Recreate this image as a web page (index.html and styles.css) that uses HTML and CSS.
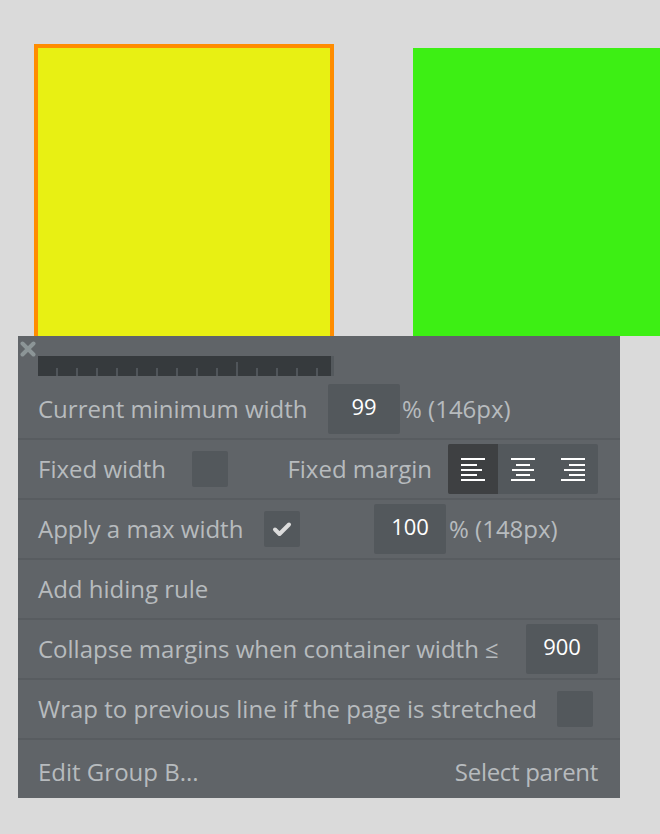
FILE: index.html
```html
<!DOCTYPE html>
<html>
<head>
<meta charset="utf-8">
<link rel="stylesheet" href="styles.css">
</head>
<body>
<div class="canvas">
  <div class="box-yellow"></div>
  <div class="box-green"></div>
</div>
<div class="panel">
  <svg class="close" width="16" height="16" viewBox="0 0 16 16"><path d="M2.5 2.5 L13.5 13.5 M13.5 2.5 L2.5 13.5" stroke="#8c9597" stroke-width="4" stroke-linecap="round"/></svg>
  <div class="ruler">
    <div class="ruler-track">
      <i></i><i></i><i></i><i></i><i></i><i></i><i></i><i></i><i></i><i class="tall"></i><i></i><i></i><i></i><i></i>
    </div>
    <div class="ruler-end"></div>
  </div>
  <div class="row">
    <span class="label w1">Current minimum width</span>
    <span class="num">99</span>
    <span class="label unit">% (146px)</span>
  </div>
  <div class="row">
    <span class="label w2">Fixed width</span>
    <span class="check"></span>
    <span class="label fm">Fixed margin</span>
    <div class="align">
      <span class="seg on"><svg width="24" height="24" viewBox="0 0 24 24"><rect x="0" y="1" width="24" height="2"/><rect x="0" y="7" width="16" height="2"/><rect x="0" y="12" width="21" height="2"/><rect x="0" y="17" width="16" height="2"/><rect x="0" y="22" width="24" height="2"/></svg></span>
      <span class="seg"><svg width="24" height="24" viewBox="0 0 24 24"><rect x="0" y="1" width="24" height="2"/><rect x="5" y="7" width="14" height="2"/><rect x="1" y="12" width="22" height="2"/><rect x="5" y="17" width="14" height="2"/><rect x="0" y="22" width="24" height="2"/></svg></span>
      <span class="seg"><svg width="24" height="24" viewBox="0 0 24 24"><rect x="0" y="1" width="24" height="2"/><rect x="8" y="7" width="16" height="2"/><rect x="3" y="12" width="21" height="2"/><rect x="8" y="17" width="16" height="2"/><rect x="0" y="22" width="24" height="2"/></svg></span>
    </div>
  </div>
  <div class="row">
    <span class="label w3">Apply a max width</span>
    <span class="check"><svg width="36" height="36" viewBox="0 0 36 36"><path d="M11 18.5 L15.5 23 L25 13.5" fill="none" stroke="#dcdcdc" stroke-width="4" stroke-linecap="round" stroke-linejoin="round"/></svg></span>
    <span class="num n3">100</span>
    <span class="label u3">% (148px)</span>
  </div>
  <div class="row">
    <span class="label">Add hiding rule</span>
  </div>
  <div class="row">
    <span class="label grow">Collapse margins when container width ≤</span>
    <span class="num">900</span>
  </div>
  <div class="row">
    <span class="label grow">Wrap to previous line if the page is stretched</span>
    <span class="check c6"></span>
  </div>
  <div class="row last">
    <span class="label grow">Edit Group B...</span>
    <span class="label sp">Select parent</span>
  </div>
</div>
</body>
</html>
```
FILE: styles.css
```css
html, body {
  margin: 0;
  padding: 0;
  background: #dadada;
  font-family: "Open Sans", "Noto Sans", sans-serif;
}
.canvas {
  display: flex;
  height: 292px;
  padding-top: 44px;
  padding-left: 34px;
  overflow: hidden;
}
.box-yellow {
  width: 292px;
  height: 292px;
  background: #e8f013;
  border: 4px solid #ff8c00;
  border-bottom: none;
}
.box-green {
  margin-top: 4px;
  margin-left: 79px;
  width: 247px;
  height: 288px;
  background: #3def14;
}
.panel {
  position: relative;
  margin-left: 18px;
  width: 602px;
  height: 462px;
  background: #606468;
  padding-top: 20px;
  box-sizing: border-box;
}
.close {
  position: absolute;
  left: 2px;
  top: 5px;
}
.ruler {
  display: flex;
  margin-left: 20px;
  height: 20px;
}
.ruler-track {
  width: 293px;
  height: 20px;
  background: #363a3d;
  display: flex;
  align-items: flex-end;
  padding-left: 18px;
  box-sizing: border-box;
  gap: 18px;
}
.ruler-track i {
  display: block;
  width: 2px;
  height: 8px;
  background: #50555a;
}
.ruler-track i.tall {
  height: 14px;
}
.ruler-end {
  width: 3px;
  height: 20px;
  background: #54595d;
}
.row {
  display: flex;
  align-items: center;
  height: 60px;
  box-sizing: border-box;
  border-bottom: 2px solid #585c60;
  padding-left: 20px;
  padding-right: 22px;
  color: #b7bbbe;
  font-size: 24px;
}
.ruler + .row {
  margin-top: 4px;
}
.row.last {
  border-bottom: none;
  height: 58px;
  padding-top: 6px;
}
.label {
  white-space: nowrap;
  padding-bottom: 2px;
}
.w1 { width: 290px; }
.w2 { width: 154px; }
.w3 { width: 226px; }
.grow { flex: 1; }
.fm { margin-left: auto; margin-right: 16px; }
.num {
  width: 72px;
  height: 50px;
  box-sizing: border-box;
  padding-bottom: 7px;
  background: #53585c;
  border-radius: 2px;
  color: #ffffff;
  font-size: 22px;
  display: flex;
  align-items: center;
  justify-content: center;
}
.unit { margin-left: 2px; }
.n3 { margin-left: 74px; }
.u3 { margin-left: 3px; }
.check {
  width: 36px;
  height: 36px;
  background: #53585c;
  border-radius: 2px;
  display: block;
}
.check svg { display: block; }
.c6 { margin-right: 5px; }
.align {
  display: flex;
  height: 50px;
  background: #53585c;
  border-radius: 2px;
  overflow: hidden;
}
.seg {
  width: 50px;
  height: 50px;
  display: flex;
  align-items: center;
  justify-content: center;
}
.seg.on { background: #3e4042; }
.seg svg { fill: #ffffff; }
.sp { margin-right: 0; letter-spacing: -0.3px; }
```
